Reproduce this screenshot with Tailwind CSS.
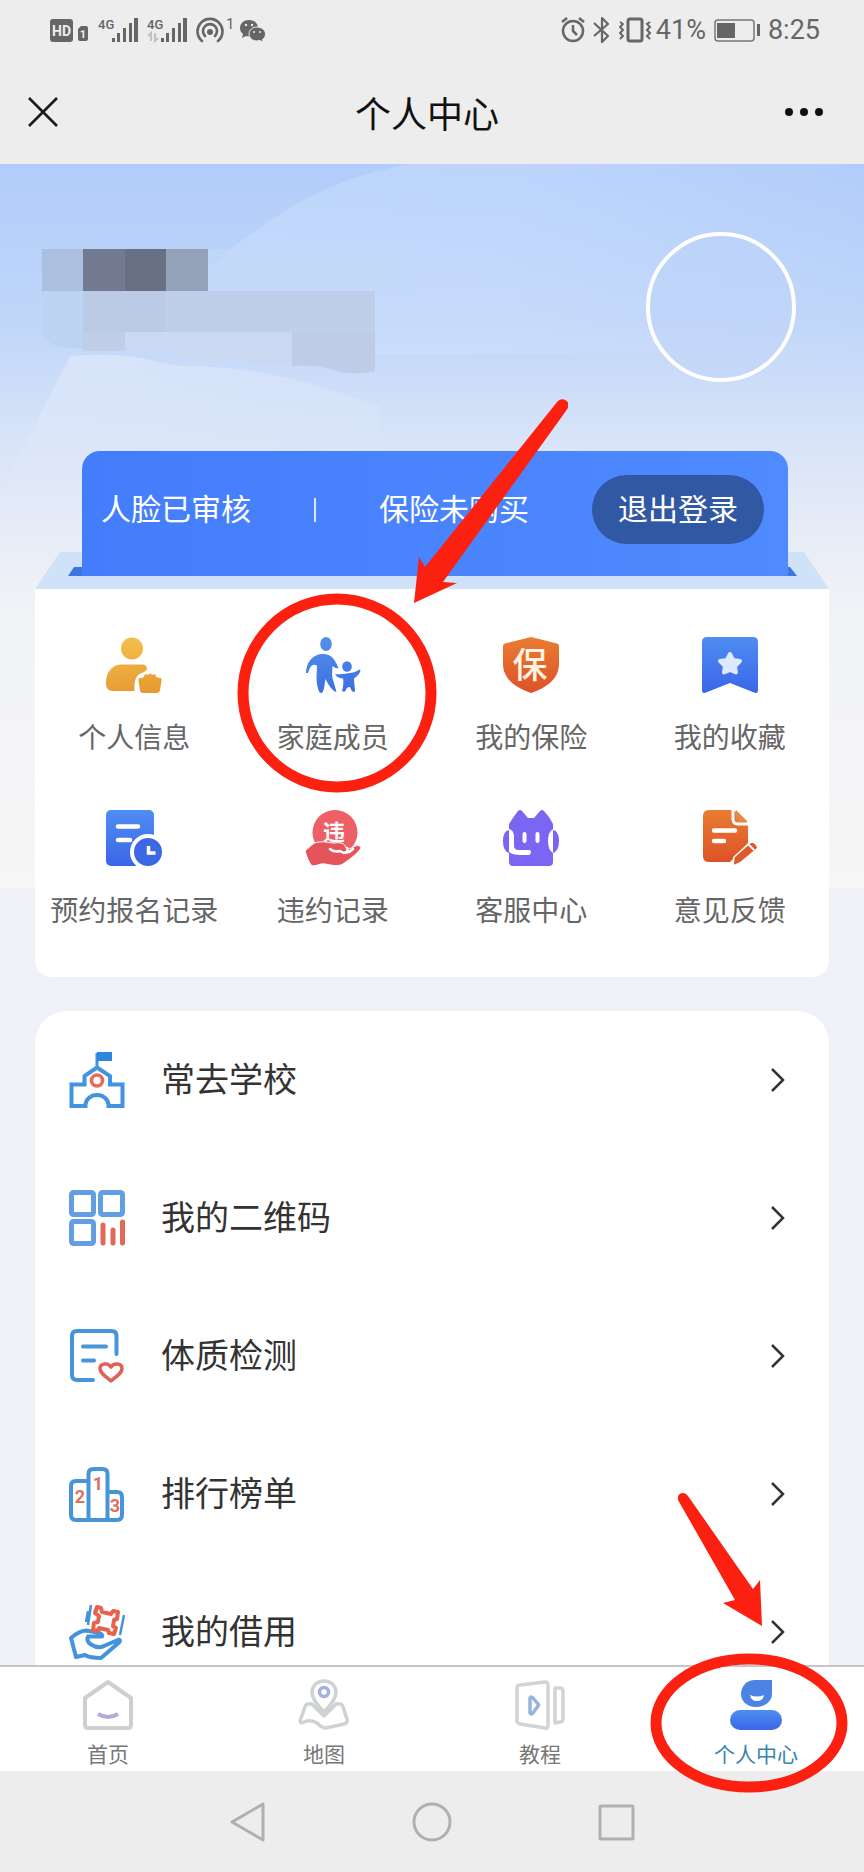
<!DOCTYPE html>
<html lang="zh-CN">

<head>
    <meta charset="UTF-8">
    <meta name="viewport" content="width=device-width, initial-scale=1.0">
    <title>个人中心</title>

    <!-- Tailwind CSS CDN -->
    <script src="https://cdn.jsdelivr.net/npm/@tailwindcss/browser@4"></script>
</head>

<body class="relative min-h-screen bg-[#eff1f6] font-['Noto_Sans_CJK_SC',sans-serif] text-[#333]">

    <!-- Header -->
    <header class="bg-[#ededed]">
        <div class="flex h-[60px] items-center justify-between pl-[50px] pr-11 text-[#666]">
            <div class="flex items-center gap-2">
                <svg class="h-7 w-10" viewBox="0 0 40 28" fill="#666">
                    <rect x="0" y="3" width="23" height="23" rx="3" />
                    <text x="11.500" y="20" text-anchor="middle" font-family="Roboto" font-weight="700" font-size="14" fill="#ededed">HD</text>
                    <path d="M28 13l3-3h5a2 2 0 0 1 2 2v11a2 2 0 0 1-2 2h-6a2 2 0 0 1-2-2z" />
                    <text x="33" y="22" text-anchor="middle" font-family="Roboto" font-weight="700" font-size="11" fill="#ededed">1</text>
                </svg>
                <svg class="h-7 w-[41px]" viewBox="0 0 41 28" fill="#666">
                    <text x="0" y="13" font-family="Roboto" font-weight="500" font-size="13">4G</text>
                    <path d="M14 22h3v4h-3zM19 17h3v9h-3zM25 12h3v14h-3zM31 7h3v19h-3zM36 2h4v24h-4z" />
                </svg>
                <svg class="h-7 w-[41px]" viewBox="0 0 41 28" fill="#666">
                    <text x="0" y="13" font-family="Roboto" font-weight="500" font-size="13">4G</text>
                    <path d="M14 22h3v4h-3zM19 17h3v9h-3zM25 12h3v14h-3zM31 7h3v19h-3zM36 2h4v24h-4z" />
                    <path d="M4 25v-8l-3 3M8 17v8l3-3" fill="none" stroke="#c2c2c2" stroke-width="2" />
                </svg>
                <svg class="h-7 w-[42px]" viewBox="0 0 42 28" fill="none" stroke="#666" stroke-width="2.600" stroke-linecap="round">
                    <path d="M6 25a12.500 12.500 0 1 1 16 0M9 20a7 7 0 1 1 10 0" />
                    <circle cx="14" cy="16" r="3" fill="#666" stroke="none" />
                    <text x="30" y="13" font-family="Roboto" font-size="15" fill="#666" stroke="none">1</text>
                </svg>
                <svg class="-ml-1.5 h-7 w-[26px]" viewBox="0 0 26 28">
                    <path d="M9 4C4 4 0 7.500 0 12c0 3 1.500 5 3 6l-1 4 4-2c6 1.500 12-1 12-8 0-5-4-8-9-8z" fill="#666" />
                    <path d="M17 11c-4.500 0-8 3-8 7s3.500 7 8 7l3-.500 3 2-.500-3c2-1.500 3-3 3-5.500 0-4-4-7-8.500-7z" fill="#666" stroke="#ededed" />
                    <g fill="#ededed"><circle cx="6" cy="9" r="1.200" /><circle cx="12" cy="9" r="1.200" /><circle cx="14" cy="16" r="1" /><circle cx="20" cy="16" r="1" /></g>
                </svg>
            </div>
            <div class="flex items-center font-[Roboto] text-[27px]">
                <svg class="mr-1 h-7 w-[84px]" viewBox="0 0 84 28" fill="none" stroke="#666" stroke-width="2.500" stroke-linejoin="round">
                    <circle cx="12" cy="15" r="10" />
                    <path d="M12 9v6l4 4M1 6l5-4M18 2l5 4" />
                    <path d="M33 7l14 13-6 6V2l6 6-14 12" stroke-width="2.200" />
                    <rect x="67" y="3" width="14" height="22" rx="2" stroke-width="3" />
                    <path d="M59 6l3 2-3 3 3 3-3 3 3 3-3 3" stroke-width="2" />
                </svg>
                <svg class="-ml-1 mr-1 h-7 w-[7px]" viewBox="0 0 7 28" fill="none" stroke="#666" stroke-width="2">
                    <path d="M5 6L2 8l3 3-3 3 3 3-3 3 3 3" />
                </svg>
                <span>41%</span>
                <svg class="mx-2 h-7 w-[46px]" viewBox="0 0 46 28" fill="none" stroke="#777" stroke-width="1.500">
                    <rect x="1" y="4" width="39" height="21" rx="3" />
                    <path d="M3 7h18v15H3zM43 8h3v12h-3z" fill="#666" stroke="none" />
                </svg>
                <span>8:25</span>
            </div>
        </div>
        <div class="flex h-[104px] items-center justify-between pl-7 pr-[38px]">
            <button type="button" aria-label="关闭" class="flex w-14 justify-start">
                <svg class="size-8" viewBox="0 0 32 32" fill="none" stroke="#1a1a1a" stroke-width="2.600">
                    <path d="M1 2l28 28M29 2L1 30" />
                </svg>
            </button>
            <h1 class="text-[36px] leading-[52px] text-[#111]">个人中心</h1>
            <button type="button" aria-label="更多" class="flex w-14 justify-end">
                <svg class="h-4 w-14" viewBox="0 0 56 16" fill="#111">
                    <circle cx="19" cy="8" r="4" /><circle cx="34" cy="8" r="4" /><circle cx="49" cy="8" r="4" />
                </svg>
            </button>
        </div>
    </header>

    <main class="relative">
        <!-- Hero background -->
        <svg class="absolute inset-x-0 top-0 h-[724px] w-full" viewBox="0 0 864 724" preserveAspectRatio="none" aria-hidden="true">
            <defs>
                <linearGradient id="sky" x2="0" y2="1">
                    <stop offset="0" stop-color="#b2cdfb" />
                    <stop offset=".22" stop-color="#c0d6f9" />
                    <stop offset=".36" stop-color="#d5e2f8" />
                    <stop offset=".5" stop-color="#e6ebf7" />
                    <stop offset=".62" stop-color="#f2f3f7" />
                    <stop offset="1" stop-color="#f6f6f6" />
                </linearGradient>
                <linearGradient id="hill">
                    <stop offset="0" stop-color="#d4e4ff" stop-opacity=".35" />
                    <stop offset=".5" stop-color="#d4e4ff" stop-opacity=".3" />
                    <stop offset="1" stop-color="#d4e4ff" stop-opacity="0" />
                </linearGradient>
                <linearGradient id="snow" x2=".3" y2="1">
                    <stop offset="0" stop-color="#e6ecfa" stop-opacity=".6" />
                    <stop offset=".8" stop-color="#e6ecfa" stop-opacity="0" />
                    <stop offset="1" stop-color="#e6ecfa" stop-opacity="0" />
                </linearGradient>
            </defs>
            <path d="M0 0h864v724H0z" fill="url(#sky)" />
            <path d="M200 110C260 60 320 15 410 0h454v190H360L180 160z" fill="url(#hill)" />
            <path d="M0 330l70-138c60-5 80 5 110 10 70 0 120 12 200 40v160H0z" fill="url(#snow)" />
        </svg>

        <!-- User info -->
        <section class="relative flex h-[287px] items-start justify-between pl-[42px] pr-[68px] pt-[68px]">
            <svg class="mt-[17px] h-[126px] w-[373px]" viewBox="0 0 373 126" aria-hidden="true">
                <path d="M166 0h207v42H166z" fill="#c3d9f9" opacity=".6" />
                <path d="M0 0h41v42H0z" fill="#abc0e1" />
                <path d="M41 0h42v42H41z" fill="#717a90" />
                <path d="M83 0h41v42H83z" fill="#687083" />
                <path d="M124 0h42v42h-42z" fill="#94a2b9" />
                <path d="M0 42h41v57q-30 2-41-12z" fill="#bdd3f3" />
                <path d="M41 42h292v41H41z" fill="#bfcfe9" />
                <path d="M41 42h83v41H41z" fill="#bccbe5" />
                <path d="M41 83h42v19H41z" fill="#c0cee8" />
                <path d="M83 83h167v34l-30-2q-20-7-50-4-30 0-50-10H83z" fill="#cad8f1" />
                <path d="M250 83h83v39q-20 5-38 0-15-6-45-5z" fill="#becce7" />
            </svg>
            <div class="size-[150px] rounded-full border-4 border-white bg-[#bdd2fa]/40"></div>
        </section>

        <section class="relative mx-[35px]">
            <div class="relative pb-[13px] pl-[47px] pr-[41px]">
                <svg class="absolute inset-x-0 bottom-0 h-[37px] w-full" viewBox="0 0 794 37" preserveAspectRatio="none" aria-hidden="true">
                    <path d="M25 0h744l25 37H0z" fill="#cfe2f8" />
                    <path d="M39 15h716l7 9H33z" fill="#3d76e0" />
                </svg>
                <div class="relative flex h-[125px] items-center justify-between rounded-t-[18px] bg-linear-to-r from-[#437dfb] to-[#508aff] pb-2 pl-[19px] pr-6 text-[30px] text-white">
                    <span class="pb-1">人脸已审核</span>
                    <span class="h-6 w-0.5 bg-white/80"></span>
                    <span class="pb-1">保险未购买</span>
                    <button type="button" class="h-[69px] rounded-full bg-[#3058a3] px-[26px] pb-1">退出登录</button>
                </div>
            </div>

            <nav aria-label="服务" class="grid grid-cols-4 gap-y-[54px] rounded-b-2xl bg-white py-12 text-[28px] leading-10 text-[#666]">
                <a href="#" class="flex flex-col items-center gap-[23px] whitespace-nowrap">
                    <svg class="size-14" viewBox="0 0 56 56" fill="url(#gold)">
                        <defs>
                            <linearGradient id="gold" gradientUnits="userSpaceOnUse" x1="20" y1="0" x2="30" y2="56">
                                <stop offset="0" stop-color="#f3c04d" /><stop offset="1" stop-color="#e79a32" />
                            </linearGradient>
                        </defs>
                        <circle cx="26" cy="11.500" r="11" />
                        <path d="M16 27.500h20c6 0 7 6 1 8-7 2-9 7-8.500 18.500H7c-5 0-7-3-7-8 0-11 6-18.500 16-18.500z" />
                        <path d="M34 41c3 0 4-1 5-4q4 2 5-1 2 3 5 1c1 3 2 4 5 4q2 0 1.500 3l-1.500 9q-.500 3-3 3H37q-3 0-3-3l-1.500-9q-.500-3 1.500-3z" />
                    </svg>
                    个人信息
                </a>
                <a href="#" class="relative flex flex-col items-center gap-[23px] whitespace-nowrap">
                    <svg class="size-14" viewBox="0 0 56 56" fill="url(#family)">
                        <defs>
                            <linearGradient id="family" gradientUnits="userSpaceOnUse" x1="20" y1="0" x2="30" y2="56">
                                <stop offset="0" stop-color="#5590ec" /><stop offset="1" stop-color="#3c6fe4" />
                            </linearGradient>
                        </defs>
                        <ellipse cx="21" cy="7" rx="5.800" ry="7" />
                        <path d="M1 36C1 25 8 17 18 17c9 0 12 6 15.500 14-3 1-4-1-6-2 0 4-1 8 0 12l4 14c-4-1-8-7-11-13-1 5-1 10-3 13.500-2 1-3 0-4-2-1-4-2-8-2-13l.500-12C7 26 5 30 3 36z" />
                        <ellipse cx="42" cy="29.500" rx="4.800" ry="5.300" />
                        <path d="M30 37c8 1 11-1 15-1 4-.500 7-2 10-3.500l.500 1c-1 4-4 6-6.500 8 0 5 1 9 1 13-3 1-3 0-5-4.500-3 0-3 1-5 4.500l-3 0c1-5 2-9 1-13-3 0-6-1-8-4.500z" />
                    </svg>
                    家庭成员
                    <svg class="pointer-events-none absolute left-1/2 -top-[44px] -ml-24 size-[200px] max-w-none" viewBox="0 0 200 200" fill="none" aria-hidden="true">
                        <circle cx="100" cy="100" r="94" stroke="#fb2010" stroke-width="11" />
                    </svg>
                </a>
                <a href="#" class="flex flex-col items-center gap-[23px] whitespace-nowrap">
                    <svg class="size-14" viewBox="0 0 56 56">
                        <defs>
                            <linearGradient id="orange" x2="0" y2="1">
                                <stop offset="0" stop-color="#ea7c33" /><stop offset="1" stop-color="#dc5228" />
                            </linearGradient>
                        </defs>
                        <path d="M28 0l26 6.500q2 .500 2 2.500v18c0 15-13 24-28 29C13 51 0 42 0 27V9q0-2 2-2.500z" fill="url(#orange)" />
                        <text x="27" y="41" text-anchor="middle" font-size="35" font-weight="500" fill="#fff2e2">保</text>
                    </svg>
                    我的保险
                </a>
                <a href="#" class="flex flex-col items-center gap-[23px] whitespace-nowrap">
                    <svg class="size-14" viewBox="0 0 56 56">
                        <defs>
                            <linearGradient id="blue" x2="0" y2="1">
                                <stop offset="0" stop-color="#4f8df0" /><stop offset="1" stop-color="#3a66e8" />
                            </linearGradient>
                        </defs>
                        <path d="M5 0h46q5 0 5 5v48q0 4-4 2.500L28 46 4 55.500Q0 57 0 53V5q0-5 5-5z" fill="url(#blue)" />
                        <path d="M28 17l3 6 7 1-5 5 1 6.500-6-2.500-6 2.500 1-6.500-5-5 7-1z" fill="#dce9ff" stroke="#dce9ff" stroke-width="4" stroke-linejoin="round" />
                    </svg>
                    我的收藏
                </a>
                <a href="#" class="flex flex-col items-center gap-[23px] whitespace-nowrap">
                    <svg class="size-14" viewBox="0 0 56 56">
                        <rect x="0" y="0" width="48" height="56" rx="5" fill="url(#blue)" />
                        <path d="M12 16.500h20M12 30h12" stroke="#fff" stroke-width="4.500" stroke-linecap="round" />
                        <circle cx="42" cy="42" r="16" fill="#3c68e4" stroke="#fff" stroke-width="4" />
                        <path d="M42.500 36v7h7" fill="none" stroke="#fff" stroke-width="3.500" />
                    </svg>
                    预约报名记录
                </a>
                <a href="#" class="flex flex-col items-center gap-[23px] whitespace-nowrap">
                    <svg class="size-14" viewBox="0 0 56 56">
                        <circle cx="30" cy="22.500" r="22.500" fill="#ef6066" />
                        <text x="29" y="30" text-anchor="middle" font-size="22" font-weight="700" fill="#fff">违</text>
                        <path d="M0 41c5-4 8-9 14-9 6-1 10 1 15 1 6-1 11 0 12 5 5 1 6 0 9-2 3-1 6 0 6 2-4 6-11 11-18 16-5 3-12 1-18 0-5-1-7 2-13 2-4-5-5-9-7-15z" fill="#e5535b" stroke="#fff" stroke-width="1" />
                        <path d="M25 39c3 3 6 3 10 2 4 3 9 2 13-2M42 38q2 4-3 5" fill="none" stroke="#fff" stroke-width="2.500" stroke-linecap="round" />
                    </svg>
                    违约记录
                </a>
                <a href="#" class="flex flex-col items-center gap-[23px] whitespace-nowrap">
                    <svg class="size-14" viewBox="0 0 56 56" fill="#7a66f3">
                        <path d="M6 14Q11 6 15 1q2-2 4 0l6 7h6l6-7q2-2 4 0 5 5 9 13v38q0 4-4 4H10q-4 0-4-4z" />
                        <path d="M6 20v23Q0 41 0 31t6-11zM50 20v23q6-2 6-12t-6-11z" />
                        <path d="M6 19q5 1 5 8v9q0 4 5 4h10q2 0 2 2t-2 3H18Q9 45 6 42zM50 19q-5 3-5 12t5 12z" fill="#fff" />
                        <path d="M21.500 24v7M34.500 24v7" stroke="#fff" stroke-width="4" stroke-linecap="round" />
                    </svg>
                    客服中心
                </a>
                <a href="#" class="flex flex-col items-center gap-[23px] whitespace-nowrap">
                    <svg class="size-14" viewBox="0 0 56 56">
                        <path d="M7 0h25L46 14v19L28 52H7q-6 0-6-6V6q0-6 6-6z" fill="url(#orange)" />
                        <path d="M34 0l12 12h-8q-4 0-4-4z" fill="#e58a45" />
                        <path d="M31 0v9q0 5 5 5h11" fill="none" stroke="#fff" stroke-width="3" />
                        <path d="M12 20.500h21M12 31h10" stroke="#fff" stroke-width="4.500" stroke-linecap="round" />
                        <path d="M31 56l1-9 17-15q5 0 7 6L38 53z" fill="#dd5a2a" stroke="#fff" stroke-width="1.500" />
                        <path d="M46 34l6 6" stroke="#fff" stroke-width="2" />
                    </svg>
                    意见反馈
                </a>
            </nav>

            <svg class="pointer-events-none absolute left-1/2 -top-[52px] -ml-5 h-[210px] w-[156px]" viewBox="412 399 156 210" fill="#fb2010" aria-hidden="true">
                <path d="M557.500 401.500q4-4 8.500-1t1 9L443 582l14 1-43 20 5-46 6 10z" />
            </svg>
        </section>

        <!-- Menu -->
        <ul class="relative mx-[35px] mt-[34px] rounded-[32px] bg-white text-[34px]">
            <li>
                <a href="#" class="flex h-[138px] items-center pl-[34px] pr-11">
                    <svg class="size-14" viewBox="0 0 56 56" fill="none" stroke="#4394e0" stroke-width="4">
                        <path d="M2.500 54V32.500H15.500V24L28 15.500 41 24v8.500h12.500V54H39.500V53a11.500 10 0 0 0-23 0v1z" />
                        <path d="M28 15V1" stroke-width="3" />
                        <path d="M28 0h15v9H28z" fill="#2f86e0" stroke="none" />
                        <circle cx="28" cy="28.500" r="5.500" stroke="#ea6a58" stroke-width="3.500" />
                    </svg>
                    <span class="ml-9 grow pb-1.5">常去学校</span>
                    <svg class="h-6 w-4" viewBox="0 0 16 24" fill="none" stroke="#333" stroke-width="2.500"><path d="M3 1l11 11L3 23" /></svg>
                </a>
            </li>
            <li>
                <a href="#" class="flex h-[138px] items-center pl-[34px] pr-11">
                    <svg class="size-14" viewBox="0 0 56 56" fill="none" stroke="#639ee2" stroke-width="5">
                        <rect x="2.500" y="2.500" width="22" height="22" rx="2" />
                        <rect x="31.500" y="2.500" width="22" height="22" rx="2" />
                        <rect x="2.500" y="31.500" width="22" height="22" rx="2" />
                        <path d="M34 35v18M44 40v13M53.500 32v21" stroke="#e2685a" stroke-linecap="round" />
                    </svg>
                    <span class="ml-9 grow pb-1.5">我的二维码</span>
                    <svg class="h-6 w-4" viewBox="0 0 16 24" fill="none" stroke="#333" stroke-width="2.500"><path d="M3 1l11 11L3 23" /></svg>
                </a>
            </li>
            <li>
                <a href="#" class="flex h-[138px] items-center pl-[34px] pr-11">
                    <svg class="size-14" viewBox="0 0 56 56" fill="none" stroke="#4795d8" stroke-width="4" stroke-linecap="round" stroke-linejoin="round">
                        <path d="M47.500 26V8q0-5-5-5H8q-5 0-5 5v39q0 5 5 5h16M14 18.500h23M14 32.500h11" />
                        <path d="M42 53C36 48 31 45 31 40.500c0-5 8-6.500 11-1.500 3-5 11-3.500 11 1.500C53 45 48 48 42 53z" stroke="#dd6257" stroke-width="3.500" />
                    </svg>
                    <span class="ml-9 grow pb-1.5">体质检测</span>
                    <svg class="h-6 w-4" viewBox="0 0 16 24" fill="none" stroke="#333" stroke-width="2.500"><path d="M3 1l11 11L3 23" /></svg>
                </a>
            </li>
            <li>
                <a href="#" class="flex h-[138px] items-center pl-[34px] pr-11">
                    <svg class="size-14" viewBox="0 0 56 56" fill="none" stroke="#4795d8" stroke-width="4">
                        <path d="M19.500 15H7q-5 0-5 5v29q0 5 5 5h41q5 0 5-5V31q0-5-5-5h-9.500M19.500 54V8q0-5 5-5h9q5 0 5 5v46" />
                        <g fill="#dd6f60" stroke="none" font-family="Roboto" font-weight="700" font-size="18" text-anchor="middle">
                            <text x="11" y="37">2</text><text x="29" y="24">1</text><text x="46" y="46">3</text>
                        </g>
                    </svg>
                    <span class="ml-9 grow pb-1.5">排行榜单</span>
                    <svg class="h-6 w-4" viewBox="0 0 16 24" fill="none" stroke="#333" stroke-width="2.500"><path d="M3 1l11 11L3 23" /></svg>
                </a>
            </li>
            <li>
                <a href="#" class="flex h-[138px] items-center pl-[34px] pr-11">
                    <svg class="size-14" viewBox="0 0 56 56" fill="none" stroke="#4394dc" stroke-width="4" stroke-linejoin="round">
                        <path d="M2 34q8-7 15-7.500l11 2q6 1 5 4l-14 0q-2 5 3 8 8 5 14 1l14-6q2 1 0 3L32 54q-11 0-16-3l-9 2z" />
                        <path d="M22 1l-3 20M19 7l-2 11M55 11l-4 20" stroke-width="2.500" />
                        <path d="M28 3l4 1 1 4 9 2 2-3 5 1-1 7-3 1-1 6 3 2-2 6-5-1-1-3-9-2-2 3-4-1 1-7 4-1 1-6-4-3z" stroke="#e9604c" stroke-width="4" />
                    </svg>
                    <span class="ml-9 grow pb-1.5">我的借用</span>
                    <svg class="h-6 w-4" viewBox="0 0 16 24" fill="none" stroke="#333" stroke-width="2.500"><path d="M3 1l11 11L3 23" /></svg>
                </a>
            </li>
        </ul>
    </main>

    <!-- Bottom bars -->
    <footer class="fixed inset-x-0 bottom-0">
        <nav aria-label="主导航" class="grid h-[106px] grid-cols-4 border-t-2 border-[#c6c6c6] bg-white pt-3 text-[21px] leading-7 text-[#777]">
            <a href="#" class="flex flex-col items-center gap-2">
                <svg class="size-[52px]" viewBox="0 0 52 52" fill="none" stroke="#cfcfcf" stroke-width="4" stroke-linejoin="round">
                    <path d="M26 3L3 19v27q0 3 3 3h40q3 0 3-3V19z" />
                    <path d="M16 35q10 6 20 0" stroke="#b3abdc" />
                </svg>
                首页
            </a>
            <a href="#" class="flex flex-col items-center gap-2">
                <svg class="size-[52px]" viewBox="0 0 52 52" fill="none" stroke="#cfd2d3" stroke-width="3.500" stroke-linejoin="round">
                    <path d="M26 33Q14 21 14 13a12 11 0 0 1 24 0q0 8-12 20z" />
                    <circle cx="26" cy="13" r="4.500" stroke="#a7b0d8" />
                    <path d="M14 25h-4q-2 0-3 3L2 42q0 3 4 1 7-3 13 1 5 5 9 5l18-4q4-1 3-5l-4-12q-1-3-3-3h-4L26 37z" />
                </svg>
                地图
            </a>
            <a href="#" class="flex flex-col items-center gap-2">
                <svg class="size-[52px]" viewBox="0 0 52 52" fill="none" stroke="#d3d3d3" stroke-width="3.500" stroke-linejoin="round">
                    <path d="M6 6l25-3q3 0 3 3v40q0 4-3 3L6 45q-3-1-3-3V9q0-3 3-3zM41 9h5q3 0 3 4v26q0 4-3 4l-5 1z" />
                    <path d="M16 19q1-2 3 0l5 6q1 1 0 2l-5 7q-2 2-3 0z" stroke="#96b5dd" />
                </svg>
                教程
            </a>
            <a href="#" class="relative flex flex-col items-center gap-2 text-[#3785ad]">
                <svg class="size-[52px]" viewBox="0 0 52 52" fill="url(#blue)">
                    <path d="M25 1h17v14c0 7-7 13-16 13S11 22 11 15C11 7 17 1 25 1z" fill="#4d83e5" />
                    <path d="M20 16q7 3 14 0-1 6-7 6t-7-6z" fill="#fff" />
                    <rect y="31" width="52" height="20" rx="10" />
                </svg>
                个人中心
                <svg class="pointer-events-none absolute left-1/2 -top-[26px] -ml-[107px] h-[140px] w-[200px] max-w-none" viewBox="0 0 200 140" fill="none" aria-hidden="true">
                    <ellipse cx="100" cy="70" rx="93" ry="64" stroke="#fb2010" stroke-width="11" />
                </svg>
                <svg class="pointer-events-none absolute left-1/2 -top-[188px] -ml-20 h-[140px] w-[90px] max-w-none" viewBox="676 1490 90 140" fill="#fb2010" aria-hidden="true">
                    <path d="M678 1499q-1-7 5-7 3 0 5 3l65 93 7-9 2 46-39-23 12-3z" />
                </svg>
            </a>
        </nav>
        <div class="flex h-[101px] items-center justify-center gap-[144px] bg-[#ededed]">
            <button type="button" aria-label="返回">
                <svg class="size-10" viewBox="0 0 40 40" fill="none" stroke="#b0b0b0" stroke-width="3" stroke-linejoin="round"><path d="M4 20L35 2v36z" /></svg>
            </button>
            <button type="button" aria-label="主屏幕">
                <svg class="size-10" viewBox="0 0 40 40" fill="none" stroke="#b0b0b0" stroke-width="3"><circle cx="20" cy="20" r="18" /></svg>
            </button>
            <button type="button" aria-label="最近任务">
                <svg class="size-10" viewBox="0 0 40 40" fill="none" stroke="#b0b0b0" stroke-width="3"><rect x="4" y="4" width="33" height="33" rx="1" /></svg>
            </button>
        </div>
    </footer>

</body>

</html>
